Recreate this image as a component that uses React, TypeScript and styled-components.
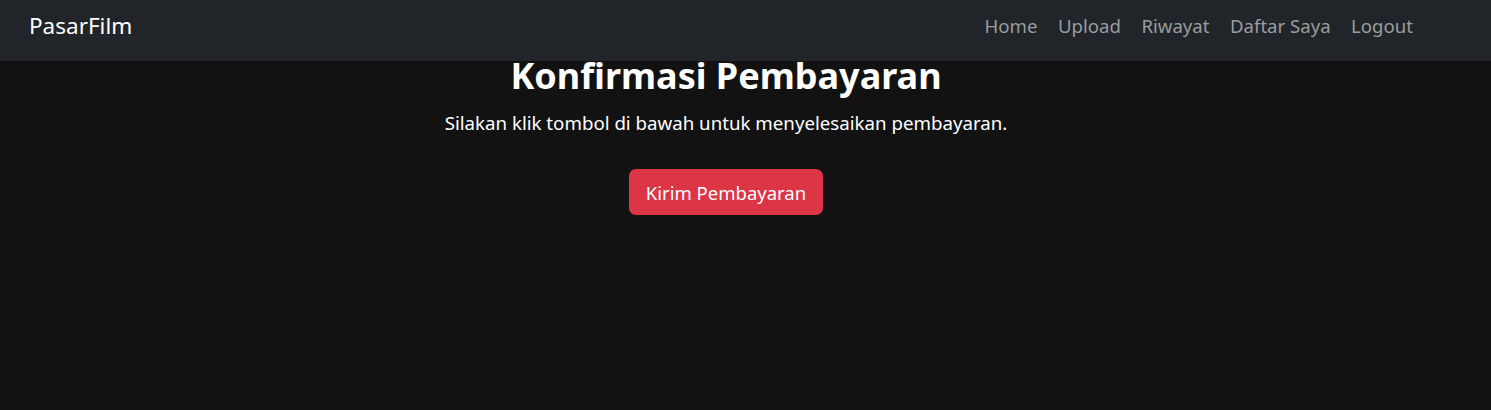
import React from "react";
import styled, { createGlobalStyle } from "styled-components";

const Global = createGlobalStyle`
  html, body { margin: 0; padding: 0; background: #121212; }
  body { font-family: "Noto Sans", "Open Sans", sans-serif; color: #fff; }
  * { box-sizing: border-box; }
`;

const Navbar = styled.nav`
  height: 61px;
  background: #212529;
  display: flex;
  align-items: center;
  justify-content: space-between;
  padding: 0 78px 8px 29px;
`;

const Brand = styled.a`
  color: #fff;
  font-size: 22.5px;
  text-decoration: none;
  line-height: 1;
`;

const NavList = styled.ul`
  display: flex;
  gap: 20.5px;
  list-style: none;
  margin: 0;
  padding: 0;
  line-height: 1;
`;

const NavLink = styled.a`
  color: #9a9c9e;
  font-size: 18.6px;
  text-decoration: none;
`;

const Main = styled.main`
  display: flex;
  flex-direction: column;
  align-items: center;
  padding-right: 39px;
`;

const Title = styled.h1`
  margin: -3px 0 0;
  font-size: 36px;
  font-weight: 700;
  line-height: 1;
`;

const Lead = styled.p`
  margin: 15px 0 0;
  font-size: 18.7px;
  line-height: 27px;
`;

const Button = styled.button`
  margin-top: 33px;
  height: 46px;
  padding: 0 17px;
  border: none;
  border-radius: 7px;
  background: #dc3545;
  color: #fff;
  font-family: inherit;
  font-size: 18.5px;
`;

export default function App() {
  const links = ["Home", "Upload", "Riwayat", "Daftar Saya", "Logout"];
  return (
    <>
      <Global />
      <Navbar>
        <Brand href="#">PasarFilm</Brand>
        <NavList>
          {links.map((l) => (
            <li key={l}>
              <NavLink href="#">{l}</NavLink>
            </li>
          ))}
        </NavList>
      </Navbar>
      <Main>
        <Title>Konfirmasi Pembayaran</Title>
        <Lead>Silakan klik tombol di bawah untuk menyelesaikan pembayaran.</Lead>
        <Button>Kirim Pembayaran</Button>
      </Main>
    </>
  );
}
